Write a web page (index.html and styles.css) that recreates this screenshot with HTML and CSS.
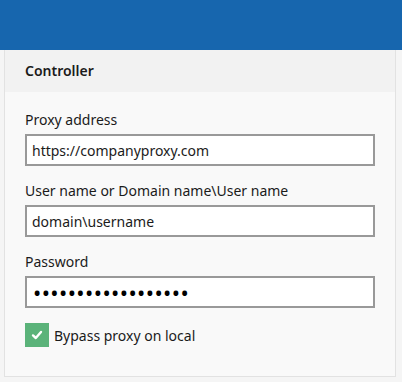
FILE: index.html
```html
<!DOCTYPE html>
<html lang="en">

<head>
    <meta charset="UTF-8">
    <meta name="viewport" content="width=device-width, initial-scale=1.0">
    <title>Proxy Settings</title>
    <link rel="stylesheet" href="styles.css">
</head>

<body>
    <div class="topbar"></div>

    <div class="panel">
        <div class="panel-header">Controller</div>
        <form class="panel-body" id="proxyForm">
            <div class="form-group">
                <label for="proxyAddress">Proxy address</label>
                <input type="text" id="proxyAddress" value="https://companyproxy.com">
            </div>
            <div class="form-group">
                <label for="userName">User name or Domain name\User name</label>
                <input type="text" id="userName" value="domain\username">
            </div>
            <div class="form-group">
                <label for="password">Password</label>
                <input type="password" id="password" value="secretpassword1234">
            </div>
            <label class="check">
                <span class="check-box">
                    <svg width="12" height="10" viewBox="0 0 12 10">
                        <path d="M2 5.4 L4.8 8 L10 2" fill="none" stroke="#fff" stroke-width="2.4" stroke-linecap="round" stroke-linejoin="round"/>
                    </svg>
                </span>
                Bypass proxy on local
            </label>
        </form>
    </div>
</body>

</html>
```

FILE: styles.css
```css
body {
    font-family: "Noto Sans", "Open Sans", sans-serif;
    font-size: 14px;
    color: #1b1b1b;
    margin: 0;
    background-color: #f5f5f5;
}

.topbar {
    height: 50px;
    background-color: #1766ae;
}

.panel {
    margin: 0 6px 0 4px;
    border: 1px solid #e2e2e2;
    border-top: none;
    background-color: #f9f9f9;
}

.panel-header {
    height: 42px;
    line-height: 42px;
    padding-left: 20px;
    background-color: #f2f2f2;
    font-weight: 600;
}

.panel-body {
    padding: 18px 20px 29px;
}

.form-group {
    margin-bottom: 15px;
}

.form-group label {
    display: block;
    line-height: 20px;
    margin-bottom: 4px;
}

input[type="text"],
input[type="password"] {
    display: block;
    box-sizing: border-box;
    width: 100%;
    height: 32px;
    margin: 0;
    padding: 0 5px;
    border: 2px solid #999;
    background-color: #fff;
    font-family: inherit;
    font-size: 14px;
    color: #1b1b1b;
    outline: none;
}

input[type="password"] {
    padding-left: 6px;
    font-size: 22px;
    letter-spacing: 0.4px;
    color: #000;
}

.check {
    display: flex;
    align-items: center;
    gap: 5px;
    height: 24px;
}

.check-box {
    display: flex;
    align-items: center;
    justify-content: center;
    width: 24px;
    height: 24px;
    background-color: #5bb37a;
}
```
